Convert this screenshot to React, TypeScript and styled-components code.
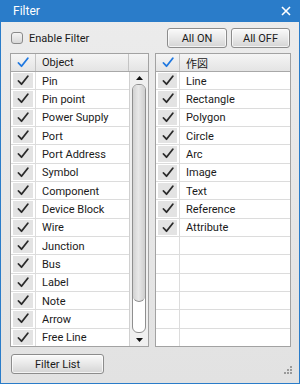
import React from "react";
import styled, { createGlobalStyle } from "styled-components";

const GlobalStyle = createGlobalStyle`
  html, body { margin: 0; padding: 0; background: #ffffff; }
  * { box-sizing: border-box; }
`;

const Window = styled.div`
  width: 300px;
  height: 384px;
  display: flex;
  flex-direction: column;
  border: 1px solid #2a7cc9;
  border-top: none;
  background: linear-gradient(180deg, #ececec 0%, #e2e2e2 100%);
  font-family: "Roboto", "Noto Sans CJK JP", sans-serif;
  font-size: 11px;
  color: #1a1a1a;
`;

const TitleBar = styled.div`
  height: 22px;
  flex: none;
  margin: 0 -1px;
  background: #2a7cc9;
  color: #ffffff;
  display: flex;
  align-items: center;
  justify-content: space-between;
  padding: 0 9px 0 13px;
  font-size: 12px;
`;

const CloseIcon = () => (
  <svg width="10" height="10" viewBox="0 0 10 10">
    <path d="M1 1 L9 9 M9 1 L1 9" stroke="#fff" strokeWidth="1.6" />
  </svg>
);

const Body = styled.div`
  flex: 1;
  display: flex;
  flex-direction: column;
  padding: 5px 9px 0 9px;
`;

const TopRow = styled.div`
  height: 22px;
  flex: none;
  display: flex;
  align-items: center;
  justify-content: space-between;
  margin-bottom: 4px;
`;

const CheckLabel = styled.label`
  display: flex;
  align-items: center;
  gap: 6px;
  padding-left: 1px;
`;

const Box = styled.span`
  width: 12px;
  height: 12px;
  border: 1px solid #8a8a8a;
  border-radius: 3px;
  background: linear-gradient(180deg, #f4f4f4, #d8d8d8);
`;

const ButtonGroup = styled.div`
  display: flex;
  gap: 4px;
`;

const Button = styled.button<{ $w: number }>`
  width: ${(p) => p.$w}px;
  height: 20px;
  border: 1px solid #8c8c8c;
  border-radius: 3px;
  background: linear-gradient(180deg, #fafafa 0%, #e8e8e8 50%, #d4d4d4 100%);
  box-shadow: inset 0 0 0 1px rgba(255, 255, 255, 0.7);
  font-family: inherit;
  font-size: 11px;
  color: #1a1a1a;
  padding: 0;
`;

const Tables = styled.div`
  display: grid;
  grid-template-columns: 139px 136px;
  gap: 6px;
  height: 294px;
  flex: none;
`;

const Table = styled.div`
  border: 1px solid #a2a2a2;
  background: #ffffff;
  display: flex;
  flex-direction: column;
  overflow: hidden;
`;

const HeaderRow = styled.div<{ $cols: string }>`
  height: 18px;
  flex: none;
  display: grid;
  grid-template-columns: ${(p) => p.$cols};
  background: linear-gradient(180deg, #f5f5f5 0%, #e4e4e4 100%);
  border-bottom: 1px solid #a8a8a8;
`;

const HeaderCell = styled.div`
  display: flex;
  align-items: center;
  padding-left: 6px;
  border-right: 1px solid #c4c4c4;
  &:last-child { border-right: none; }
`;

const HeaderCheck = styled.div`
  display: flex;
  align-items: center;
  justify-content: center;
  border-right: 1px solid #c4c4c4;
`;

const Content = styled.div`
  flex: 1;
  display: flex;
  min-height: 0;
`;

const Rows = styled.div`
  flex: 1;
  display: flex;
  flex-direction: column;
`;

const Row = styled.div<{ $cols: string }>`
  height: 18.33px;
  flex: none;
  display: grid;
  grid-template-columns: ${(p) => p.$cols};
  border-bottom: 1px solid #dcdcdc;
`;

const CheckCell = styled.div`
  display: flex;
  align-items: center;
  justify-content: center;
  border-right: 1px solid #dcdcdc;
  padding: 1px 2px;
`;

const CheckInner = styled.div<{ $filled: boolean }>`
  width: 100%;
  height: 100%;
  display: flex;
  align-items: center;
  justify-content: center;
  background: ${(p) => (p.$filled ? "#e3e3e3" : "transparent")};
`;

const TextCell = styled.div`
  display: flex;
  align-items: center;
  padding-left: 6px;
  padding-top: 1px;
  white-space: nowrap;
`;

const ScrollBar = styled.div`
  width: 19px;
  flex: none;
  border-left: 1px solid #d0d0d0;
  background: #f0f0f0;
  display: flex;
  flex-direction: column;
  align-items: center;
`;

const ArrowBtn = styled.div`
  height: 12px;
  display: flex;
  align-items: center;
  justify-content: center;
  flex: none;
`;

const Track = styled.div`
  flex: 1;
  width: 14px;
  margin: 0 0 1px;
  border: 1px solid #8f8f8f;
  border-radius: 6px;
  background: #ffffff;
  display: flex;
  flex-direction: column;
  overflow: hidden;
`;

const Thumb = styled.div`
  height: 88%;
  border-bottom: 1px solid #8f8f8f;
  border-radius: 0 0 6px 6px;
  background: linear-gradient(90deg, #d2d2d2 0%, #e8e8e8 45%, #cecece 100%);
`;

const Footer = styled.div`
  flex: 1;
  display: flex;
  align-items: flex-start;
  justify-content: space-between;
  padding: 7px 0 0 1px;
`;

const Grip = styled.div`
  align-self: flex-end;
  margin: 0 -3px 5px 0;
`;

const Check = ({ color = "#2a2a2a" }: { color?: string }) => (
  <svg width="12" height="11" viewBox="0 0 12 11">
    <path d="M1.5 6 L4.5 9.2 L10.8 1.2" stroke={color} strokeWidth="1.8" fill="none" strokeLinecap="round" strokeLinejoin="round" />
  </svg>
);

const leftItems = [
  "Pin", "Pin point", "Power Supply", "Port", "Port Address", "Symbol", "Component",
  "Device Block", "Wire", "Junction", "Bus", "Label", "Note", "Arrow", "Free Line",
];
const rightItems = ["Line", "Rectangle", "Polygon", "Circle", "Arc", "Image", "Text", "Reference", "Attribute"];

const LEFT_COLS = "25px 1fr";
const RIGHT_COLS = "24px 1fr";

export default function App() {
  const rightRows = [...rightItems, ...Array(6).fill("")];
  return (
    <>
      <GlobalStyle />
      <Window>
        <TitleBar>
          <span>Filter</span>
          <CloseIcon />
        </TitleBar>
        <Body>
          <TopRow>
            <CheckLabel>
              <Box />
              Enable Filter
            </CheckLabel>
            <ButtonGroup>
              <Button $w={60}>All ON</Button>
              <Button $w={59}>All OFF</Button>
            </ButtonGroup>
          </TopRow>
          <Tables>
            <Table>
              <HeaderRow $cols="25px 1fr 19px">
                <HeaderCheck><Check color="#1f78e0" /></HeaderCheck>
                <HeaderCell>Object</HeaderCell>
                <HeaderCell />
              </HeaderRow>
              <Content>
                <Rows>
                  {leftItems.map((t) => (
                    <Row key={t} $cols={LEFT_COLS}>
                      <CheckCell>
                        <CheckInner $filled><Check /></CheckInner>
                      </CheckCell>
                      <TextCell>{t}</TextCell>
                    </Row>
                  ))}
                </Rows>
                <ScrollBar>
                  <ArrowBtn>
                    <svg width="7" height="4" viewBox="0 0 7 4"><path d="M0 4 L3.5 0 L7 4 Z" fill="#111" /></svg>
                  </ArrowBtn>
                  <Track><Thumb /></Track>
                  <ArrowBtn>
                    <svg width="7" height="4" viewBox="0 0 7 4"><path d="M0 0 L3.5 4 L7 0 Z" fill="#111" /></svg>
                  </ArrowBtn>
                </ScrollBar>
              </Content>
            </Table>
            <Table>
              <HeaderRow $cols={RIGHT_COLS}>
                <HeaderCheck><Check color="#1f78e0" /></HeaderCheck>
                <HeaderCell>作図</HeaderCell>
              </HeaderRow>
              <Rows>
                {rightRows.map((t, i) => (
                  <Row key={i} $cols={RIGHT_COLS}>
                    <CheckCell>
                      <CheckInner $filled={!!t}>{t ? <Check /> : null}</CheckInner>
                    </CheckCell>
                    <TextCell>{t}</TextCell>
                  </Row>
                ))}
              </Rows>
            </Table>
          </Tables>
          <Footer>
            <Button $w={93}>Filter List</Button>
            <Grip>
              <svg width="10" height="10" viewBox="0 0 10 10" fill="#9a9a9a">
                <rect x="7" y="1" width="2" height="2" />
                <rect x="4" y="4" width="2" height="2" />
                <rect x="7" y="4" width="2" height="2" />
                <rect x="1" y="7" width="2" height="2" />
                <rect x="4" y="7" width="2" height="2" />
                <rect x="7" y="7" width="2" height="2" />
              </svg>
            </Grip>
          </Footer>
        </Body>
      </Window>
    </>
  );
}
